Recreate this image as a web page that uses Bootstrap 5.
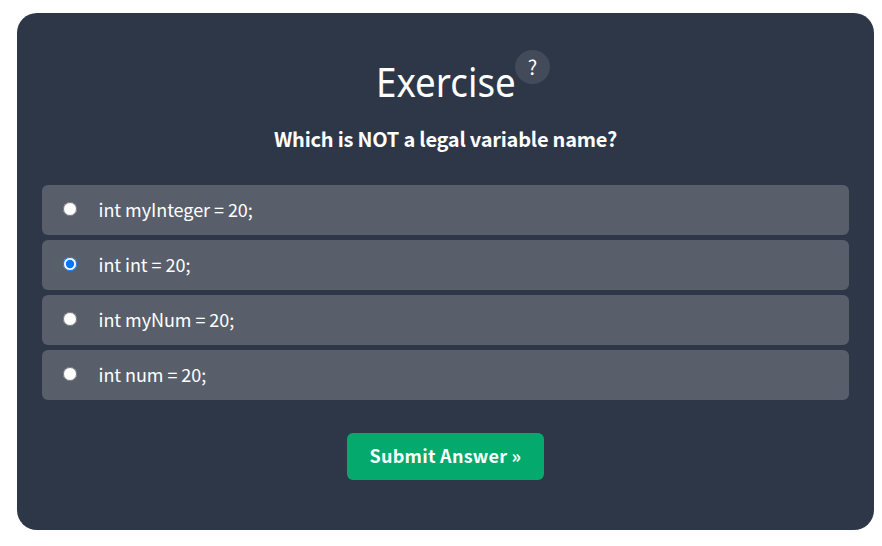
<!DOCTYPE html>
<html lang="en">
<head>
<meta charset="utf-8">
<meta name="viewport" content="width=device-width, initial-scale=1">
<title>Exercise</title>
<link href="https://cdn.jsdelivr.net/npm/bootstrap@5.3.0/dist/css/bootstrap.min.css" rel="stylesheet">
<style>
body{font-family:"Noto Sans CJK SC","Noto Sans",sans-serif;overflow:hidden}
.exercise{margin:13px 8px 0 17px;height:517px;padding:37px 25px 0;border-radius:20px;background:#2e3748}
.heading{height:65px;padding-left:35px}
.heading h2{font:400 39.5px/64px "Noto Sans",sans-serif;width:139px;white-space:nowrap;transform:scaleX(.93);transform-origin:left}
.hint{width:35px;height:34px;background:#434b5a;font-size:20px;line-height:33px}
.question{font-size:20px;line-height:30px;letter-spacing:-.23px;margin:9px 0 31px}
.options{gap:5px}
.option{height:50px;padding:0 20px;border-radius:6px;background:#585f6b;font-size:18px;letter-spacing:-.05px}
.option span{line-height:26px;margin-bottom:2px}
.option input{width:14.3px;height:14.3px;margin:-2px 21.7px 0 .5px;accent-color:#0075ff}
.submit{width:197px;height:47px;margin-top:33px;border-radius:6px;background:#04aa6d;color:#fff;font-size:18px;letter-spacing:.25px;line-height:43px;padding:0 0 3px}
.submit:hover{background:#059862;color:#fff}
</style>
</head>
<body>
<main class="exercise text-white">
<form>
<header class="heading d-flex justify-content-center align-items-start">
<h2 class="mb-0">Exercise</h2>
<span class="hint rounded-circle text-center">?</span>
</header>
<p class="question text-center fw-bold">Which is NOT a legal variable name?</p>
<div class="options d-flex flex-column">
<label class="option d-flex align-items-center"><input type="radio" name="answer"><span>int myInteger = 20;</span></label>
<label class="option d-flex align-items-center"><input type="radio" name="answer" checked><span>int int = 20;</span></label>
<label class="option d-flex align-items-center"><input type="radio" name="answer"><span>int myNum = 20;</span></label>
<label class="option d-flex align-items-center"><input type="radio" name="answer"><span>int num = 20;</span></label>
</div>
<div class="text-center"><button type="button" class="submit btn fw-bold">Submit Answer »</button></div>
</form>
</main>
<script src="https://cdn.jsdelivr.net/npm/bootstrap@5.3.0/dist/js/bootstrap.bundle.min.js"></script>
</body>
</html>
